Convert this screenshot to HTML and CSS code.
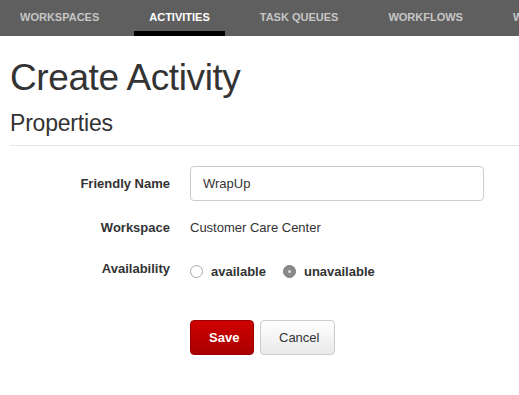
FILE: index.html
```html
<!DOCTYPE html>
<html lang="en">
<head>
    <meta charset="UTF-8">
    <title>Create Activity</title>
    <link rel="stylesheet" href="styles.css">
</head>
<body>

    <!-- top navigation -->
    <ul class="nav">
        <li>WORKSPACES</li>
        <li class="active">ACTIVITIES</li>
        <li>TASK QUEUES</li>
        <li>WORKFLOWS</li>
        <li>WORKERS</li>
    </ul>

    <div class="page">
        <h1>Create Activity</h1>
        <h2>Properties</h2>

        <form class="props">
            <div class="row">
                <label class="label" for="friendly-name">Friendly Name</label>
                <input type="text" id="friendly-name" class="text-input" value="WrapUp">
            </div>
            <div class="row row-workspace">
                <span class="label">Workspace</span>
                <span class="value">Customer Care Center</span>
            </div>
            <div class="row row-radios">
                <span class="label">Availability</span>
                <label class="radio"><span class="dot"></span>available</label>
                <label class="radio"><span class="dot checked"></span>unavailable</label>
            </div>
            <div class="row row-buttons">
                <button type="button" class="btn btn-save">Save</button>
                <button type="button" class="btn btn-cancel">Cancel</button>
            </div>
        </form>
    </div>

</body>
</html>
```

FILE: styles.css
```css
html, body { margin: 0; padding: 0; background: #fff; color: #333; font-family: "Liberation Sans", Arial, sans-serif; overflow: hidden; }

.nav { display: flex; gap: 20px; margin: 0; padding: 0 0 0 5px; height: 36px; background-color: #5f5f5f; list-style: none; white-space: nowrap; overflow: hidden; }
.nav li { padding: 0 15px; height: 31px; line-height: 34px; font-size: 11px; font-weight: bold; color: #c6c6c6; border-bottom: 5px solid transparent; }
.nav li.active { color: #fff; border-bottom-color: #000; }

.page { padding: 0 0 0 10px; }
h1 { margin: 18px 0 0; font-size: 37px; font-weight: normal; letter-spacing: -0.4px; line-height: 48px; color: #333; }
h2 { margin: 7px 0 0; padding-bottom: 8px; font-size: 23px; font-weight: normal; letter-spacing: -0.2px; line-height: 28px; border-bottom: 1px solid #e5e5e5; color: #333; }

.props { padding-top: 20px; }
.row { display: flex; align-items: center; margin: 0; font-size: 13px; }
.label { flex: 0 0 160px; text-align: right; margin-right: 20px; font-weight: bold; color: #333; }
.text-input { width: 294px; height: 35px; box-sizing: border-box; padding: 0 12px; font-family: inherit; font-size: 13px; color: #333; border: 1px solid #ccc; border-radius: 4px; }
.row-workspace { height: 34px; margin-top: 9px; }
.row-radios { margin-top: 17px; align-items: flex-start; height: 30px; }
.radio { display: flex; align-items: center; margin-top: 3px; margin-right: 17px; font-weight: bold; color: #333; }
.dot { width: 13px; height: 13px; margin-right: 8px; border: 1px solid #aaa; border-radius: 50%; background: #fff; box-sizing: border-box; position: relative; }
.dot.checked { background: #8a8a8a; border-color: #7d7d7d; }
.dot.checked::after { content: ""; position: absolute; left: 4px; top: 4px; width: 3px; height: 3px; border-radius: 50%; background: #ddd; }

.row-buttons { padding-left: 180px; margin-top: 29px; }
.btn { height: 35px; padding: 0 18px; margin-right: 6px; font-family: inherit; font-size: 13px; border-radius: 4px; cursor: pointer; }
.btn-save { width: 64px; font-weight: bold; color: #fff; background: linear-gradient(#cf0000, #a90000); border: 1px solid #9a0000; }
.btn-cancel { width: 75px; color: #333; background: linear-gradient(#fff, #e9e9e9); border: 1px solid #ccc; }
```
